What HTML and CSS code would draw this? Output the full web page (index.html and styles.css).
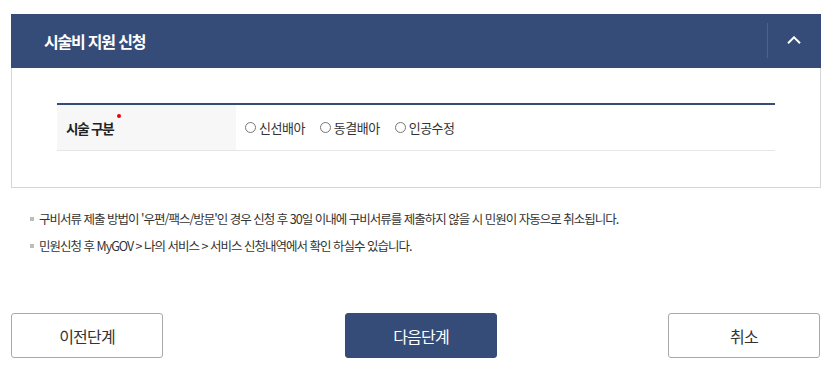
FILE: index.html
```html
<!DOCTYPE html>
<html lang="ko">
<head>
<meta charset="utf-8">
<title>시술비 지원 신청</title>
<link rel="stylesheet" href="styles.css">
</head>
<body>
<div class="page">
  <section class="panel">
    <div class="panel-head">
      <h2 class="panel-title">시술비 지원 신청</h2>
      <button class="toggle" type="button" aria-label="접기">
        <svg width="14" height="8" viewBox="0 0 14 8"><path d="M1 7.2 L7 1.3 L13 7.2" fill="none" stroke="#fff" stroke-width="2"/></svg>
      </button>
    </div>
    <div class="panel-body">
      <div class="form-table">
        <div class="form-row">
          <div class="form-label">시술 구분<span class="req"></span></div>
          <div class="form-field">
            <label class="radio"><span class="circle"></span>신선배아</label>
            <label class="radio"><span class="circle"></span>동결배아</label>
            <label class="radio"><span class="circle"></span>인공수정</label>
          </div>
        </div>
      </div>
    </div>
  </section>
  <ul class="notes">
    <li>구비서류 제출 방법이 '우편/팩스/방문'인 경우 신청 후 30일 이내에 구비서류를 제출하지 않을 시 민원이 자동으로 취소됩니다.</li>
    <li>민원신청 후 MyGOV &gt; 나의 서비스 &gt; 서비스 신청내역에서 확인 하실수 있습니다.</li>
  </ul>
  <div class="actions">
    <button class="btn" type="button">이전단계</button>
    <button class="btn btn-primary" type="button">다음단계</button>
    <button class="btn btn-last" type="button">취소</button>
  </div>
</div>
</body>
</html>
```
FILE: styles.css
```css
* { box-sizing: border-box; }
html, body { margin: 0; padding: 0; background: #fff; }
body {
  font-family: "Noto Sans CJK KR", "Noto Sans", sans-serif;
  color: #222;
}
.page { padding: 14px 13px 0 11px; }
.panel { border: 1px solid #d5d5d5; border-top: none; }
.panel-head {
  display: flex;
  align-items: center;
  justify-content: space-between;
  height: 54px;
  margin: 0 -1px;
  background: #344c77;
  padding-left: 33px;
}
.panel-title {
  margin: 0;
  color: #fff;
  font-size: 16px;
  font-weight: 700;
  letter-spacing: -1.2px;
}
.toggle {
  position: relative;
  width: 54px;
  height: 54px;
  border: none;
  background: transparent;
  padding: 0;
  display: flex;
  align-items: center;
  justify-content: center;
  padding-bottom: 2px;
}
.toggle::before {
  content: "";
  position: absolute;
  left: 0;
  top: 9px;
  bottom: 10px;
  width: 1px;
  background: #4b6390;
}
.panel-body { padding: 35px 45px 36px; }
.form-table { border-top: 2px solid #344c77; }
.form-row {
  display: flex;
  height: 46px;
  border-bottom: 1px solid #e6e6e6;
}
.form-label {
  width: 179px;
  background: #f7f7f7;
  display: flex;
  align-items: center;
  padding-left: 9px;
  font-size: 13.5px;
  font-weight: 700;
  letter-spacing: -1.2px;
  color: #222;
}
.req {
  display: inline-block;
  width: 4px;
  height: 4px;
  border-radius: 50%;
  background: #e8000b;
  align-self: flex-start;
  margin-top: 9px;
  margin-left: 4px;
}
.form-field {
  display: flex;
  align-items: center;
  gap: 15px;
  padding-left: 9px;
  font-size: 13px;
  letter-spacing: -0.5px;
  color: #333;
}
.radio { display: flex; align-items: center; gap: 3px; }
.circle {
  width: 11px;
  height: 11px;
  border: 1px solid #767676;
  border-radius: 50%;
  background: #fff;
}
.notes {
  list-style: none;
  margin: 0;
  padding: 17px 0 0 19px;
}
.notes li {
  display: flex;
  align-items: center;
  gap: 5px;
  height: 27px;
  font-size: 12.5px;
  letter-spacing: -1px;
  color: #333;
}
.notes li::before {
  content: "";
  width: 4px;
  height: 4px;
  background: #bcbcbc;
  flex: none;
}
.actions {
  display: flex;
  margin-top: 54px;
  padding-right: 1px;
}
.btn {
  flex: none;
  width: 152px;
  height: 45px;
  border: 1px solid #a9a9a9;
  border-radius: 3px;
  background: #fff;
  font-family: "Noto Sans CJK KR", "Noto Sans", sans-serif;
  font-size: 16px;
  letter-spacing: -0.8px;
  color: #333;
}
.btn-primary {
  margin-left: 182px;
  background: #344c77;
  border-color: #344c77;
  color: #fff;
}
.btn-last { margin-left: auto; }
```
